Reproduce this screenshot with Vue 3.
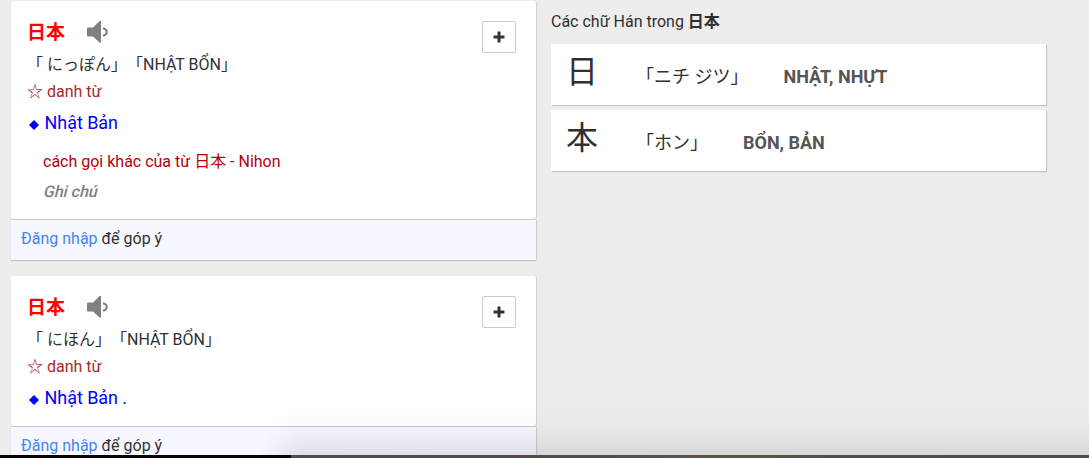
<script setup>
const entries = [
  {
    word: '日本',
    reading: '「 にっぽん」「NHẬT BỔN」',
    kind: 'danh từ',
    meaning: 'Nhật Bản',
    example: 'cách gọi khác của từ 日本 - Nihon',
    note: 'Ghi chú',
  },
  { word: '日本', reading: '「 にほん」「NHẬT BỔN」', kind: 'danh từ', meaning: 'Nhật Bản .' },
]

const kanji = [
  { char: '日', reading: '「ニチ ジツ」', han: 'NHẬT, NHỰT' },
  { char: '本', reading: '「ホン」', han: 'BỔN, BẢN' },
]
</script>

<template>
  <div class="page">
    <main class="entries">
      <section v-for="(entry, i) in entries" :key="i" class="entry">
        <div class="card">
          <div class="body">
            <div class="title">
              <span class="word">{{ entry.word }}</span>
              <svg class="speaker" width="22" height="22" viewBox="0 0 22 22">
                <path d="M1 6.500h5L12.500 0H14v21.500h-1.500L6 15.500H1q-1 0-1-1v-7q0-1 1-1z" fill="#808080" />
                <path d="M16 7.300c2.200.5 3.800 1.800 3.800 3.700s-1.600 3.200-3.800 3.700" fill="none" stroke="#808080" stroke-width="2" />
              </svg>
            </div>
            <div class="reading">{{ entry.reading }}</div>
            <div class="kind">☆ {{ entry.kind }}</div>
            <div class="meaning">
              <svg class="diamond" width="10" height="10" viewBox="0 0 10 10"><path d="M5 0l5 5-5 5-5-5z" fill="#00f" /></svg>
              <span>{{ entry.meaning }}</span>
            </div>
            <div v-if="entry.example" class="example">{{ entry.example }}</div>
            <div v-if="entry.note" class="note"><span>{{ entry.note }}</span></div>
          </div>
          <button class="add" type="button" aria-label="Add">
            <svg width="12" height="12" viewBox="0 0 12 12"><path d="M4.500.5h3v4h4v3h-4v4h-3v-4h-4v-3h4z" fill="#333" /></svg>
          </button>
        </div>
        <div class="feedback"><a>Đăng nhập</a> để góp ý</div>
      </section>
    </main>
    <aside class="side">
      <div class="heading">Các chữ Hán trong <b>日本</b></div>
      <div v-for="k in kanji" :key="k.char" class="kanji">
        <span class="char">{{ k.char }}</span>
        <span class="kana">{{ k.reading }}</span>
        <b class="han">{{ k.han }}</b>
      </div>
    </aside>
    <div class="shade"></div>
    <div class="edge"><div class="dark"></div></div>
  </div>
</template>

<style>
body {
  margin: 0;
  overflow: hidden;
}
</style>

<style scoped>
.page {
  position: relative;
  display: flex;
  box-sizing: border-box;
  width: 1089px;
  height: 458px;
  padding: 1px 0 0 11px;
  overflow: hidden;
  background: #ededed;
  color: #303030;
  font-family: Roboto, "Noto Sans CJK JP", sans-serif;
  font-size: 16px;
  white-space: pre;
  text-spacing-trim: space-all;
}
.entries {
  width: 525px;
  margin-right: 15px;
}
.entry {
  margin-bottom: 16px;
}
.card {
  display: flex;
  justify-content: space-between;
  box-sizing: border-box;
  padding: 17px 20px 11px 16px;
  border-radius: 2px;
  background: #fff;
  box-shadow: 0 1px 1px #c4c4c4, 1px 0 1px #d0d0d0;
}
.title {
  display: flex;
  align-items: center;
  height: 28px;
}
.word {
  width: 60px;
  margin-top: -4px;
  color: #f00;
  font-size: 19px;
  font-weight: 700;
}
.reading {
  height: 32px;
  margin-top: 3px;
  line-height: 32px;
}
.kind {
  height: 22px;
  color: #a52a2a;
  line-height: 22px;
}
.meaning {
  display: flex;
  align-items: center;
  height: 34px;
  margin-top: 3px;
  color: #00f;
  font-size: 18px;
  letter-spacing: -0.05px;
  line-height: 34px;
}
.diamond {
  margin: 4px 6px 0 1.5px;
}
.example {
  height: 30px;
  margin-top: 7px;
  padding-left: 16px;
  color: #b8000a;
  line-height: 30px;
}
.note {
  height: 31px;
  padding-left: 17px;
  color: #808080;
  font-weight: 500;
  line-height: 30px;
}
.note span {
  display: inline-block;
  transform: skewX(-14deg);
}
.add {
  display: flex;
  align-items: center;
  justify-content: center;
  box-sizing: border-box;
  width: 34px;
  height: 32px;
  margin-top: 3px;
  padding: 0 1px 0 0;
  border: 1px solid #ccc;
  border-radius: 2px;
  background: #fff;
}
.feedback {
  height: 40px;
  margin-top: 1px;
  padding-left: 10px;
  background: #f7f8ff;
  box-shadow: 0 1px 1px #c4c4c4, 1px 0 1px #d0d0d0;
  line-height: 37px;
}
.feedback a {
  color: #4683f1;
}
.side {
  width: 495px;
}
.heading {
  height: 43px;
  line-height: 41px;
}
.kanji {
  display: flex;
  align-items: center;
  height: 61px;
  margin-bottom: 5px;
  padding-left: 15px;
  background: #fff;
  box-shadow: 1px 1px 1px #c4c4c4;
}
.char {
  width: 70px;
  margin-top: -12px;
  font-size: 32px;
}
.kana {
  margin-top: 1px;
  font-size: 18px;
}
.han {
  margin: 4px 0 0 35px;
  color: #555;
  font-size: 18px;
}
.shade {
  position: absolute;
  right: 0;
  bottom: 3px;
  width: 829px;
  height: 50px;
  background: linear-gradient(transparent, rgba(0, 0, 0, 0.025) 55%, rgba(0, 0, 0, 0.09));
  -webkit-mask-image: linear-gradient(90deg, transparent, #000 40px);
  mask-image: linear-gradient(90deg, transparent, #000 40px);
}
.edge {
  position: absolute;
  right: 0;
  bottom: 0;
  left: 0;
  height: 3px;
  background: linear-gradient(90deg, #5c5149, #54494c, #5a5148, #514849);
}
.dark {
  width: 291px;
  height: 3px;
  background: #080302;
}
</style>
